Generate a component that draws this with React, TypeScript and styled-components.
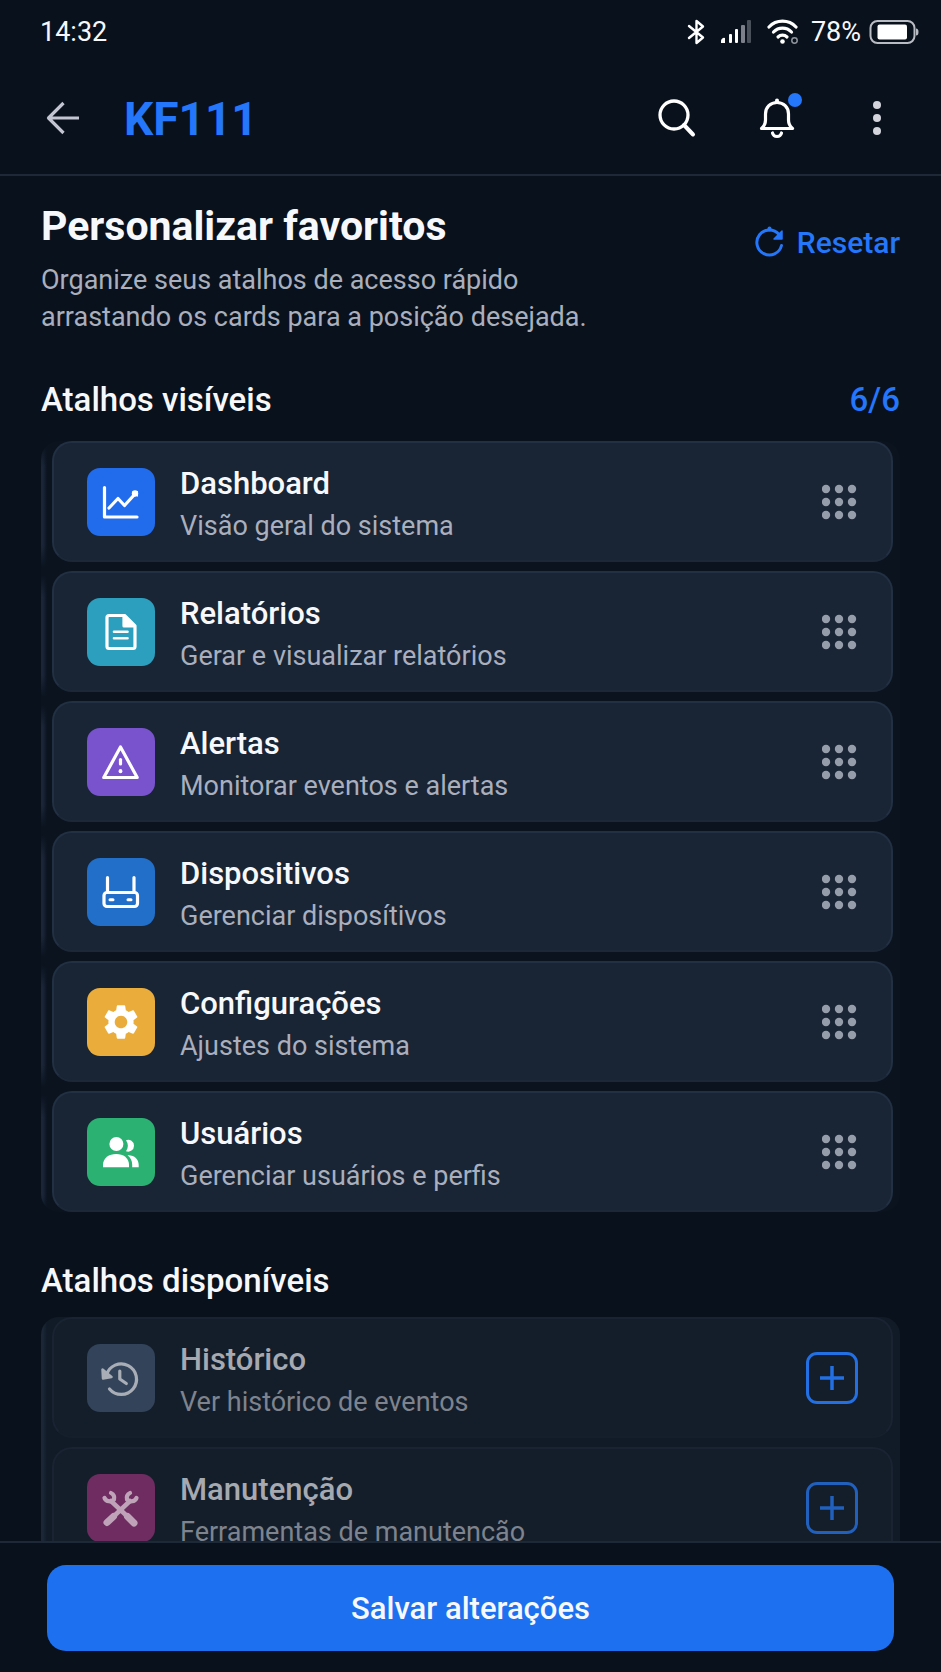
import React from "react";
import styled, { createGlobalStyle } from "styled-components";
import { MdSettings } from "react-icons/md";

const GlobalStyle = createGlobalStyle`
  *, *::before, *::after { box-sizing: border-box; }
  html, body, #root { height: 100%; }
  body {
    margin: 0;
    background: #09111c;
    color: #f7f8fb;
    font-family: Roboto, "Noto Sans", sans-serif;
  }
  button { font: inherit; color: inherit; background: none; border: 0; padding: 0; cursor: pointer; }
  h1, h2, h3, p, ul { margin: 0; padding: 0; }
  svg { display: block; flex: none; }
`;

const Screen = styled.div`
  height: 100vh;
  display: flex;
  flex-direction: column;
  background: #09111c;
`;

const StatusBar = styled.div`
  display: flex;
  justify-content: space-between;
  align-items: center;
  height: 62px;
  padding: 2px 22px 0 40px;
  font-size: 27px;
  line-height: 32px;
`;

const StatusIcons = styled.div`
  display: flex;
  align-items: center;
  gap: 15px;
`;

const Battery = styled.div`
  display: flex;
  align-items: center;
  gap: 8px;
  margin-left: -3px;
`;

const TopBar = styled.header`
  display: flex;
  align-items: center;
  height: 114px;
  padding: 0 40px 0 39px;
  border-bottom: 2px solid #1e2938;
`;

const IconButton = styled.button`
  display: grid;
  place-items: center;
  width: 48px;
  height: 48px;
`;

const BrandName = styled.div`
  flex: 1;
  padding: 2px 0 0 37px;
  color: #2476fb;
  font-size: 46px;
  font-weight: 700;
  line-height: 56px;
`;

const TopActions = styled.nav`
  display: flex;
  gap: 52px;
`;

const BellButton = styled(IconButton)`
  position: relative;
`;

const UnreadDot = styled.span`
  position: absolute;
  top: -1px;
  right: -1px;
  width: 14px;
  height: 14px;
  border-radius: 50%;
  background: #2476fb;
`;

const Content = styled.main`
  flex: 1;
  min-height: 0;
  overflow-y: auto;
  scrollbar-width: none;
  padding: 26px 41px 0;
`;

const Intro = styled.section`
  display: flex;
  justify-content: space-between;
  align-items: flex-start;
`;

const PageTitle = styled.h1`
  font-size: 41px;
  font-weight: 700;
  line-height: 48px;
`;

const Description = styled.p`
  max-width: 600px;
  margin-top: 12px;
  color: #a9afbd;
  font-size: 27px;
  line-height: 37px;
`;

const ResetButton = styled.button`
  display: flex;
  align-items: center;
  gap: 12px;
  height: 48px;
  margin-top: 16px;
  color: #2476fb;
  font-size: 30px;
  font-weight: 500;
`;

const Section = styled.section<{ $top: number }>`
  padding-top: ${(p) => p.$top}px;
`;

const SectionHeader = styled.div`
  display: flex;
  justify-content: space-between;
  align-items: center;
  height: 40px;
  font-size: 33px;
  font-weight: 500;
`;

const SectionTitle = styled.h2`
  font-size: 33px;
  font-weight: 500;
`;

const Counter = styled.span`
  color: #2476fb;
`;

const VisibleList = styled.ul`
  display: flex;
  flex-direction: column;
  gap: 9px;
  margin-top: 22px;
  padding: 0 7px 0 11px;
  list-style: none;
  border-radius: 18px;
  background:
    repeating-linear-gradient(#0b131f 0 4px, transparent 26px 104px, #0b131f 126px 130px) left / 6px 100% no-repeat,
    linear-gradient(90deg, #1a2638 0 2px, #0b131f 6px);
`;

const AvailableList = styled(VisibleList)`
  margin-top: 17px;
  background: linear-gradient(90deg, #1b2736 0 2px, #111a27 6px);
`;

const Card = styled.li<{ $muted?: boolean }>`
  display: flex;
  align-items: center;
  height: 121px;
  padding: 0 33px;
  border: 2px solid ${(p) => (p.$muted ? "#192331" : "#223043")};
  border-bottom-color: ${(p) => (p.$muted ? "#151f2c" : "#1c2838")};
  border-radius: 20px;
  background: ${(p) => (p.$muted ? "#141e2b" : "#192434")};
`;

const Tile = styled.span<{ $color: string }>`
  display: grid;
  place-items: center;
  flex: none;
  width: 68px;
  height: 68px;
  border-radius: 13px;
  background: ${(p) => p.$color};
`;

const CardText = styled.div<{ $muted?: boolean }>`
  flex: 1;
  padding: 6px 0 0 25px;
  color: ${(p) => (p.$muted ? "#a6a9b0" : "#f7f8fb")};
`;

const CardTitle = styled.h3`
  font-size: 31px;
  font-weight: 500;
  line-height: 42px;
`;

const CardHint = styled.p<{ $muted?: boolean }>`
  color: ${(p) => (p.$muted ? "#7e848e" : "#a9afbd")};
  font-size: 27px;
  line-height: 42px;
`;

const DragHandle = styled.button`
  cursor: grab;
`;

const AddButton = styled.button<{ $dim?: boolean }>`
  display: grid;
  place-items: center;
  width: 52px;
  height: 52px;
  border: 3px solid ${(p) => (p.$dim ? "#2160bd" : "#2270e4")};
  border-radius: 11px;
  color: ${(p) => (p.$dim ? "#2160bd" : "#2270e4")};
`;

const Footer = styled.footer`
  flex: none;
  padding: 22px 47px 21px;
  border-top: 2px solid #1e2938;
  background: #09111c;
`;

const SaveButton = styled.button`
  display: block;
  width: 100%;
  height: 86px;
  border-radius: 19px;
  background: #1d70ef;
  font-size: 31px;
  font-weight: 500;
`;

const BluetoothIcon = () => (
  <svg width="18" height="26" viewBox="0 0 18 26" fill="none" stroke="#fff" strokeWidth="2.4" strokeLinejoin="round" strokeLinecap="round">
    <path d="M2 7 16 18.500 9.500 24V2l6.500 5.500L2 19" />
  </svg>
);

const SignalIcon = () => (
  <svg width="32" height="26" viewBox="0 0 32 26">
    <path d="M1 24v-2a3 3 0 0 1 4-3v5z" fill="#fff" />
    <rect x="9" y="15" width="3" height="9" rx="1" fill="#fff" />
    <rect x="15" y="10" width="3" height="14" rx="1" fill="#fff" />
    <rect x="21" y="6" width="4" height="18" rx="1" fill="#7b808a" />
    <rect x="27" y="1" width="4" height="23" rx="1" fill="#4a505a" />
  </svg>
);

const WifiIcon = () => (
  <svg width="32" height="26" viewBox="0 0 32 26" fill="none" stroke="#fff" strokeWidth="3.2" strokeLinecap="round">
    <path d="M2 8a18.500 18.500 0 0 1 27 0" />
    <path d="M6.500 13a12.500 12.500 0 0 1 18 0" />
    <path d="M11 18a6.500 6.500 0 0 1 9 0" />
    <circle cx="15.500" cy="22.500" r="2.300" fill="#fff" stroke="none" />
    <circle cx="27.500" cy="21.500" r="2.700" stroke="#8f949d" strokeWidth="1.500" />
  </svg>
);

const BatteryIcon = () => (
  <svg width="50" height="26" viewBox="0 0 50 26">
    <rect x="1.500" y="2" width="44" height="22" rx="7" fill="none" stroke="#b9bcc2" strokeWidth="2" />
    <rect x="8.500" y="5.500" width="29.500" height="15" rx="2" fill="#fff" />
    <path d="M47 9.500q2.500 0 2.500 3.500t-2.500 3.500z" fill="#b9bcc2" />
  </svg>
);

const BackIcon = () => (
  <svg width="34" height="34" viewBox="0 0 34 34" fill="none" stroke="#c3c6d2" strokeWidth="3.200" strokeLinejoin="round">
    <path d="M17.500 2 2.500 17l15 15M3 17h30" />
  </svg>
);

const SearchIcon = () => (
  <svg width="40" height="40" viewBox="0 0 40 40" fill="none" stroke="#fff" strokeWidth="3.300" strokeLinecap="round">
    <circle cx="17" cy="17" r="14" />
    <path d="m27 27 9 9.500" strokeWidth="4" />
  </svg>
);

const BellIcon = () => (
  <svg width="36" height="42" viewBox="0 0 36 42" fill="none" stroke="#fff" strokeWidth="3.200" strokeLinejoin="round" strokeLinecap="round">
    <path d="M2.500 31.500c3-2.500 4-4.500 4-8.500v-6c0-7 5-11.500 11.500-11.500S29.500 10 29.500 17v6c0 4 1 6 4 8.500z" />
    <path d="M18 3.500v1" strokeWidth="4" />
    <path d="M13.500 36c.5 2.200 2.500 3.500 4.500 3.500s4-1.300 4.500-3.500" />
  </svg>
);

const MoreIcon = () => (
  <svg width="10" height="36" viewBox="0 0 10 36" fill="#d3d4dc">
    <circle cx="5" cy="5" r="4" />
    <circle cx="5" cy="18" r="4" />
    <circle cx="5" cy="31" r="4" />
  </svg>
);

const ResetIcon = () => (
  <svg width="30" height="32" viewBox="0 0 30 32" fill="none" stroke="#2476fb" strokeWidth="3" strokeLinejoin="round" strokeLinecap="round">
    <path d="M26.500 19.500A12.500 12.500 0 1 1 24 8.500" />
    <path d="M27 5v8h-8z" fill="#2476fb" strokeWidth="1.500" />
    <path d="M14.500 2.500v1" strokeWidth="4" />
  </svg>
);

const GripIcon = () => (
  <svg width="36" height="36" viewBox="0 0 36 36" fill="#969daa">
    {[5, 18, 31].map((y) => [4, 17, 30].map((x) => <circle key={`${x}-${y}`} cx={x} cy={y} r="4.200" />))}
  </svg>
);

const PlusIcon = () => (
  <svg width="24" height="24" viewBox="0 0 24 24" stroke="currentColor" strokeWidth="3.500">
    <path d="M12 0v24M0 12h24" />
  </svg>
);

const TileSvg = ({ color = "#fff", children }: { color?: string; children: React.ReactNode }) => (
  <svg width="68" height="68" viewBox="1 0 68 68" fill="none" stroke={color} strokeWidth="3.200" strokeLinejoin="round" strokeLinecap="round" aria-hidden="true">
    {children}
  </svg>
);

const ChartIcon = () => (
  <TileSvg>
    <path d="M18.500 19.500v29.500H51" />
    <path d="m23 40 9-9.500 6.500 7L49 26" />
    <circle cx="49" cy="25.500" r="3.200" fill="#fff" stroke="none" />
    <path d="M46 23h6v6z" fill="#fff" stroke="none" />
  </TileSvg>
);

const ReportIcon = () => (
  <TileSvg>
    <path d="M38.500 17.500H23q-2 0-2 2v29q0 2 2 2h24q2 0 2-2V28z" />
    <path d="M38 18v10h10z" fill="#fff" />
    <path d="M28 33.800h13.500M28 40.200h13.500" strokeWidth="2.600" />
  </TileSvg>
);

const AlertIcon = () => (
  <TileSvg>
    <path d="M34.500 19 17.800 49.500h33.400z" />
    <path d="M34.500 31.500v4.500" />
    <path d="M34.500 43v.3" strokeWidth="3.800" />
  </TileSvg>
);

const RouterIcon = () => (
  <TileSvg>
    <rect x="18" y="34.500" width="33.500" height="14" rx="3" />
    <path d="M21.500 19.500v14M48 19.500v14" />
    <path d="M24 41.800h3M42 41.800h3" strokeWidth="3" />
  </TileSvg>
);

const UsersIcon = () => (
  <TileSvg>
    <g fill="#fff" stroke="none">
      <circle cx="30.400" cy="26" r="7" />
      <path d="M17 49.300v-2.500C17 40 23 36 30.200 36S43 40 43 46.800v2.500z" />
      <path d="M40 22.200a5.900 5.900 0 1 1 0 11c2.500-3.500 2.500-7.500 0-11z" />
      <path d="M41.500 37.200c6.500-.5 11.200 3.800 11.200 9.600v2.500h-6.500v-2.500c0-4-1.500-7-4.700-9.600z" />
    </g>
  </TileSvg>
);

const HistoryIcon = () => (
  <TileSvg color="#a9adb6">
    <path d="M20.500 31A15.300 15.300 0 1 1 23.500 45" />
    <path d="m16.500 25.500.5 9 8.500-1.500z" fill="#a9adb6" strokeWidth="2.500" />
    <path d="M33.800 27v8l6.500 4.500" />
  </TileSvg>
);

const WrenchesIcon = () => (
  <TileSvg color="#bfa3b8">
    <path d="m25 27 17 16M44 27 27 43" strokeWidth="4.500" />
    <path d="m41.500 42.500 6.500 6.500M27.500 42.500l-6.500 6" strokeWidth="7" />
    <path d="M18.500 24a5.800 5.800 0 0 0 9.500 1.500 5.800 5.800 0 0 0-3-6.500M50.500 24a5.800 5.800 0 0 1-9.500 1.500 5.800 5.800 0 0 1 3-6.500" strokeWidth="4.200" />
  </TileSvg>
);

const visible = [
  { title: "Dashboard", hint: "Visão geral do sistema", color: "#216ced", icon: <ChartIcon /> },
  { title: "Relatórios", hint: "Gerar e visualizar relatórios", color: "#2b9fbd", icon: <ReportIcon /> },
  { title: "Alertas", hint: "Monitorar eventos e alertas", color: "#7953cd", icon: <AlertIcon /> },
  { title: "Dispositivos", hint: "Gerenciar disposítivos", color: "#216fc8", icon: <RouterIcon /> },
  { title: "Configurações", hint: "Ajustes do sistema", color: "#eaad3b", icon: <MdSettings size={42} color="#fff" aria-hidden="true" /> },
  { title: "Usuários", hint: "Gerenciar usuários e perfis", color: "#2bb273", icon: <UsersIcon /> },
];

const available = [
  { title: "Histórico", hint: "Ver histórico de eventos", color: "#32435a", icon: <HistoryIcon /> },
  { title: "Manutenção", hint: "Ferramentas de manutenção", color: "#6e2c61", icon: <WrenchesIcon /> },
];

export default function App() {
  return (
    <Screen>
      <GlobalStyle />
      <StatusBar>
        <span>14:32</span>
        <StatusIcons>
          <BluetoothIcon />
          <SignalIcon />
          <WifiIcon />
          <Battery><span>78%</span><BatteryIcon /></Battery>
        </StatusIcons>
      </StatusBar>
      <TopBar>
        <IconButton aria-label="Voltar"><BackIcon /></IconButton>
        <BrandName>KF111</BrandName>
        <TopActions>
          <IconButton aria-label="Buscar"><SearchIcon /></IconButton>
          <BellButton aria-label="Notificações"><BellIcon /><UnreadDot /></BellButton>
          <IconButton aria-label="Mais opções"><MoreIcon /></IconButton>
        </TopActions>
      </TopBar>
      <Content>
        <Intro>
          <div>
            <PageTitle>Personalizar favoritos</PageTitle>
            <Description>Organize seus atalhos de acesso rápido arrastando os cards para a posição desejada.</Description>
          </div>
          <ResetButton><ResetIcon />Resetar</ResetButton>
        </Intro>
        <Section $top={43}>
          <SectionHeader><SectionTitle>Atalhos visíveis</SectionTitle><Counter>6/6</Counter></SectionHeader>
          <VisibleList>
            {visible.map((s) => (
              <Card key={s.title}>
                <Tile $color={s.color}>{s.icon}</Tile>
                <CardText>
                  <CardTitle>{s.title}</CardTitle>
                  <CardHint>{s.hint}</CardHint>
                </CardText>
                <DragHandle aria-label={`Mover ${s.title}`}><GripIcon /></DragHandle>
              </Card>
            ))}
          </VisibleList>
        </Section>
        <Section $top={48}>
          <SectionHeader><SectionTitle>Atalhos disponíveis</SectionTitle></SectionHeader>
          <AvailableList>
            {available.map((s, i) => (
              <Card key={s.title} $muted>
                <Tile $color={s.color}>{s.icon}</Tile>
                <CardText $muted>
                  <CardTitle>{s.title}</CardTitle>
                  <CardHint $muted>{s.hint}</CardHint>
                </CardText>
                <AddButton $dim={i > 0} aria-label={`Adicionar ${s.title}`}><PlusIcon /></AddButton>
              </Card>
            ))}
          </AvailableList>
        </Section>
      </Content>
      <Footer>
        <SaveButton>Salvar alterações</SaveButton>
      </Footer>
    </Screen>
  );
}
